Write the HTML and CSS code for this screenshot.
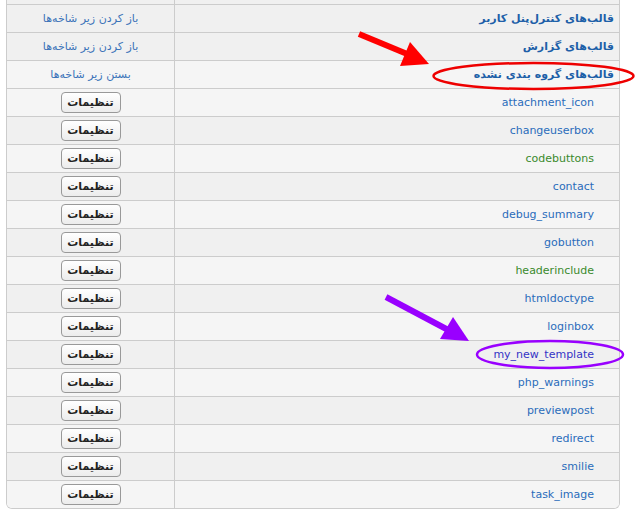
FILE: index.html
```html
<!DOCTYPE html>
<html lang="fa" dir="rtl">
<head>
    <meta charset="UTF-8">
    <title>قالب‌ها</title>
    <link rel="stylesheet" href="styles.css">
</head>
<body>
    <div class="tree">
        <div class="row stub"><div class="title"></div><div class="act"></div></div>
        <div class="row group"><div class="title"><a href="#">قالب‌های کنترل‌پنل کاربر</a></div><div class="act"><a href="#">باز کردن زیر شاخه‌ها</a></div></div>
        <div class="row group"><div class="title"><a href="#">قالب‌های گزارش</a></div><div class="act"><a href="#">باز کردن زیر شاخه‌ها</a></div></div>
        <div class="row group alt"><div class="title"><a href="#">قالب‌های گروه بندی نشده</a></div><div class="act"><a href="#">بستن زیر شاخه‌ها</a></div></div>
        <div class="row item alt"><div class="title"><a href="#">attachment_icon</a></div><div class="act"><button>تنظیمات</button></div></div>
        <div class="row item"><div class="title"><a href="#">changeuserbox</a></div><div class="act"><button>تنظیمات</button></div></div>
        <div class="row item alt"><div class="title"><a href="#" class="custom">codebuttons</a></div><div class="act"><button>تنظیمات</button></div></div>
        <div class="row item"><div class="title"><a href="#">contact</a></div><div class="act"><button>تنظیمات</button></div></div>
        <div class="row item alt"><div class="title"><a href="#">debug_summary</a></div><div class="act"><button>تنظیمات</button></div></div>
        <div class="row item"><div class="title"><a href="#">gobutton</a></div><div class="act"><button>تنظیمات</button></div></div>
        <div class="row item alt"><div class="title"><a href="#" class="custom">headerinclude</a></div><div class="act"><button>تنظیمات</button></div></div>
        <div class="row item"><div class="title"><a href="#">htmldoctype</a></div><div class="act"><button>تنظیمات</button></div></div>
        <div class="row item alt"><div class="title"><a href="#">loginbox</a></div><div class="act"><button>تنظیمات</button></div></div>
        <div class="row item"><div class="title"><a href="#" class="new">my_new_template</a></div><div class="act"><button>تنظیمات</button></div></div>
        <div class="row item alt"><div class="title"><a href="#">php_warnings</a></div><div class="act"><button>تنظیمات</button></div></div>
        <div class="row item"><div class="title"><a href="#">previewpost</a></div><div class="act"><button>تنظیمات</button></div></div>
        <div class="row item alt"><div class="title"><a href="#">redirect</a></div><div class="act"><button>تنظیمات</button></div></div>
        <div class="row item"><div class="title"><a href="#">smilie</a></div><div class="act"><button>تنظیمات</button></div></div>
        <div class="row item alt"><div class="title"><a href="#">task_image</a></div><div class="act"><button>تنظیمات</button></div></div>
    </div>

    <!-- annotations drawn over the screenshot -->
    <svg class="marks" width="640" height="527" viewBox="0 0 640 527">
        <line x1="359" y1="34" x2="412" y2="56" stroke="#ff0000" stroke-width="6"/>
        <polygon points="429,64 410,42 400,66" fill="#ff0000"/>
        <ellipse cx="533.5" cy="76" rx="100" ry="13" fill="none" stroke="#ee0000" stroke-width="2.5"/>

        <line x1="386" y1="297" x2="452" y2="332" stroke="#9900ff" stroke-width="6"/>
        <polygon points="469,341 453,317 440,339" fill="#9900ff"/>
        <ellipse cx="550" cy="354.5" rx="73" ry="13.5" fill="none" stroke="#9900ff" stroke-width="2.5"/>
    </svg>
</body>
</html>
```

FILE: styles.css
```css
body {
    margin: 0;
    background-color: #fff;
    font-family: "DejaVu Sans", Tahoma, sans-serif;
    font-size: 11px;
    position: relative;
}
a {
    color: #2a6cbb;
    text-decoration: none;
}
.tree {
    direction: rtl;
    width: 612px;
    margin: 0 20px 0 6px;
    border: 1px solid #ccc;
    border-top: none;
    border-radius: 0 0 6px 6px;
    overflow: hidden;
}
.row {
    display: grid;
    grid-template-columns: 1fr 167px;
    height: 27px;
    border-bottom: 1px solid #ccc;
    background-color: #f0f0f0;
}
.row.alt {
    background-color: #f5f5f5;
}
.row:last-child {
    border-bottom: none;
}
.row.stub {
    height: 4px;
}
.title {
    border-left: 1px solid #ccc;
    display: flex;
    align-items: center;
    padding-right: 5px;
}
.item .title {
    padding-right: 25px;
}
.group .title a {
    font-weight: bold;
    color: #1d5fa8;
}
.title a.custom {
    color: #3a8a2c;
}
.title a.new {
    color: #3434c6;
}
.act {
    display: flex;
    align-items: center;
    justify-content: center;
}
.act a {
    color: #3b73b9;
}
button {
    font-family: "DejaVu Sans", Tahoma, sans-serif;
    font-size: 11px;
    font-weight: bold;
    color: #222;
    width: 60px;
    height: 21px;
    padding: 0;
    border: 1px solid #999;
    border-radius: 4px;
    background: linear-gradient(#fff, #ececec);
}
.marks {
    position: absolute;
    left: 0;
    top: 0;
}
```
